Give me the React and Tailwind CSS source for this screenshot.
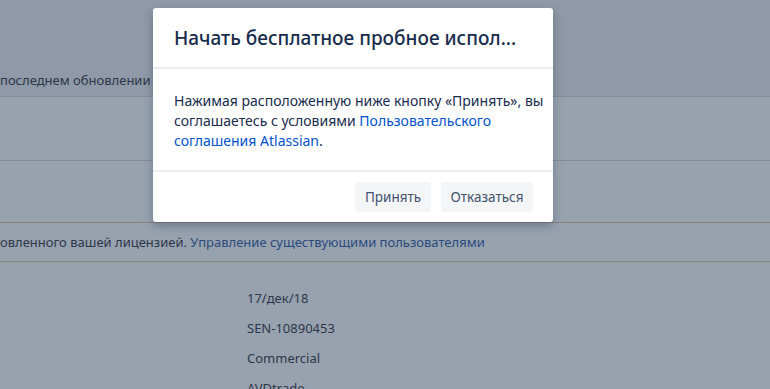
import React from 'react';

const details = ['17/дек/18', 'SEN-10890453', 'Commercial', 'AVDtrade'];

const App = () => {
  return (
    <div className="relative w-[770px] h-[389px] overflow-hidden bg-[#98a2af] text-[13px] leading-5 text-[#2c3749]" style={{ fontFamily: '"Noto Sans", "Open Sans", sans-serif' }}>
      {/* page behind the overlay */}
      <div className="h-[97px] bg-[#8f99a7] border-b border-[#858e9b] pt-[70px]">
        <p className="whitespace-nowrap">последнем обновлении о вашей лицензии</p>
      </div>
      <div className="h-[64px] border-b border-[#838c99]" />
      <div className="h-[61px]" />
      <div className="h-[40px] border-y border-[#8b837d] flex items-center whitespace-nowrap">
        <span>овленного вашей лицензией.&nbsp;</span>
        <span className="text-[#2a4a7c]">Управление существующими пользователями</span>
      </div>
      <div className="pl-[247px] pt-[26px] flex flex-col">
        {details.map((d) => (
          <div key={d} className="h-[30px] leading-5">{d}</div>
        ))}
      </div>

      {/* modal */}
      <div className="absolute left-[153px] top-[8px] w-[400px] bg-white rounded-[3px] shadow-[0_4px_10px_rgba(9,30,66,0.3)] text-[#172b4d]">
        <div className="h-[61px] px-[21px] flex items-center border-b-2 border-[#ebecf0]">
          <h2 className="text-[19px] font-medium whitespace-nowrap">Начать бесплатное пробное испол...</h2>
        </div>
        <div className="px-[21px] pt-[22px] pb-[19px] text-[14px] leading-5">
          <p className="whitespace-nowrap">Нажимая расположенную ниже кнопку «Принять», вы</p>
          <p className="whitespace-nowrap">
            соглашаетесь с условиями <a className="text-[#0052cc]">Пользовательского</a>
          </p>
          <p className="whitespace-nowrap">
            <a className="text-[#0052cc]">соглашения Atlassian</a>.
          </p>
        </div>
        <div className="border-t-2 border-[#ebecf0] flex justify-end gap-[10px] px-[20px] pt-[10px] pb-[10px]">
          <button className="h-[30px] w-[76px] rounded-[3px] bg-[#f4f5f7] text-[#42526e] text-[13.5px]">Принять</button>
          <button className="h-[30px] w-[92px] rounded-[3px] bg-[#f4f5f7] text-[#42526e] text-[13.5px]">Отказаться</button>
        </div>
      </div>
    </div>
  );
};

export default App;
